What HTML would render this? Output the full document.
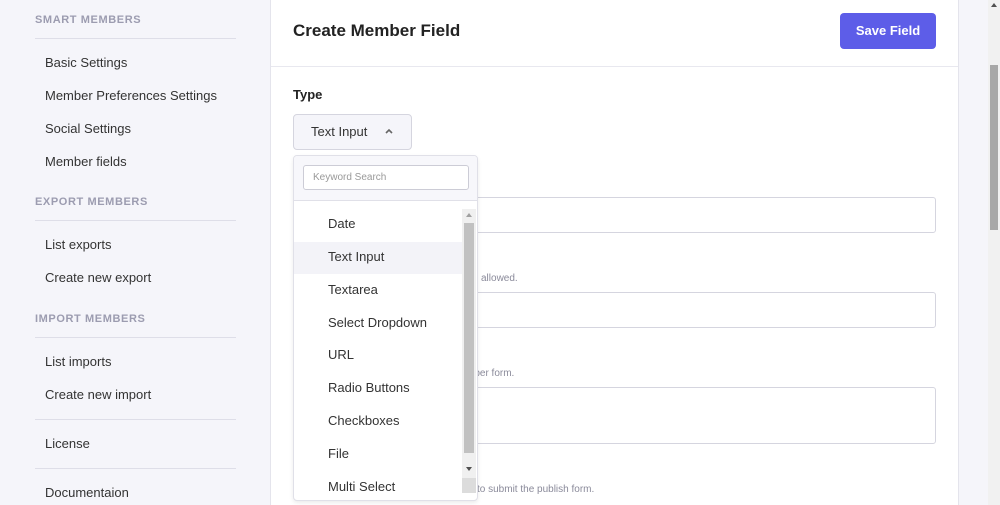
<!DOCTYPE html><html><head><style>
body{margin:0;width:1000px;height:505px;overflow:hidden;background:#f5f5fa;font-family:"Liberation Sans",sans-serif;position:relative;color:#222}
.a{position:absolute;white-space:nowrap}
.h{font-size:11px;font-weight:bold;color:#9c9cb0;letter-spacing:.6px;left:35px}
.l{font-size:13px;color:#333;left:45px}
.sep{position:absolute;left:35px;width:201px;height:1px;background:#dedee8}
.inp{position:absolute;left:293px;width:641px;border:1px solid #d5d5df;border-radius:3px;background:#fff}
.hint{font-size:10px;color:#8a8a9a}
.it{position:absolute;left:328px;font-size:13px;color:#333}
</style></head><body>
<div class="a h" style="top:14px">SMART MEMBERS</div>
<div class="sep" style="top:38px"></div>
<div class="a l" style="top:55px">Basic Settings</div>
<div class="a l" style="top:88px">Member Preferences Settings</div>
<div class="a l" style="top:121px">Social Settings</div>
<div class="a l" style="top:154px">Member fields</div>
<div class="a h" style="top:196px">EXPORT MEMBERS</div>
<div class="sep" style="top:220px"></div>
<div class="a l" style="top:237px">List exports</div>
<div class="a l" style="top:270px">Create new export</div>
<div class="a h" style="top:313px">IMPORT MEMBERS</div>
<div class="sep" style="top:337px"></div>
<div class="a l" style="top:354px">List imports</div>
<div class="a l" style="top:387px">Create new import</div>
<div class="sep" style="top:419px"></div>
<div class="a l" style="top:436px">License</div>
<div class="sep" style="top:468px"></div>
<div class="a l" style="top:485px">Documentaion</div>

<div class="a" style="left:270px;top:0;width:687px;height:505px;background:#fff;border-left:1px solid #e4e4ec;border-right:1px solid #e4e4ec"></div>
<div class="a" style="left:271px;top:66px;width:687px;height:1px;background:#e8e8ef"></div>
<div class="a" style="left:293px;top:21px;font-size:17px;font-weight:bold;color:#222">Create Member Field</div>
<div class="a" style="left:840px;top:13px;width:96px;height:36px;background:#5d5de8;border-radius:4px;color:#fff;font-size:13px;font-weight:bold;text-align:center;line-height:36px">Save Field</div>
<div class="a" style="left:293px;top:87px;font-size:13px;font-weight:bold">Type</div>
<div class="a" style="left:293px;top:114px;width:117px;height:34px;border:1px solid #d5d5df;border-radius:4px;background:#f5f5fa"></div>
<div class="a" style="left:311px;top:124px;font-size:13px;color:#333">Text Input</div>
<svg class="a" style="left:384px;top:127px" width="10" height="8"><path d="M2 6L5 3L8 6" stroke="#666" stroke-width="1.6" fill="none"/></svg>

<div class="inp" style="top:197px;height:34px"></div>
<div class="a hint" style="left:481px;top:273px">allowed.</div>
<div class="inp" style="top:292px;height:34px"></div>
<div class="a hint" style="left:466px;top:368px">mber form.</div>
<div class="inp" style="top:387px;height:55px"></div>
<div class="a hint" style="left:477px;top:484px">to submit the publish form.</div>

<div class="a" style="left:293px;top:155px;width:183px;height:344px;background:#fff;border:1px solid #e0e0e8;border-radius:4px;box-shadow:0 2px 4px rgba(0,0,0,.08);overflow:hidden">
<div style="position:absolute;left:0;top:0;width:183px;height:44px;background:#f7f7fb;border-bottom:1px solid #e0e0e8"></div>
<div style="position:absolute;left:9px;top:9px;width:164px;height:23px;border:1px solid #ccccd6;border-radius:3px;background:#fff;font-size:10px;color:#999;line-height:23px;padding-left:9px;box-sizing:border-box;width:166px;height:25px">Keyword Search</div>
<div style="position:absolute;left:0;top:86px;width:168px;height:32px;background:#f3f3f8"></div>
<div style="position:absolute;left:168px;top:53px;width:14px;height:284px;background:#f0f0f0"></div>
<div style="position:absolute;left:170px;top:67px;width:10px;height:230px;background:#c1c1c1"></div>
<div style="position:absolute;left:168px;top:322px;width:14px;height:15px;background:#dcdcdc"></div>
<svg style="position:absolute;left:170px;top:55px" width="10" height="8"><path d="M2 6L5 2L8 6Z" fill="#a0a0a0"/></svg>
<svg style="position:absolute;left:170px;top:309px" width="10" height="8"><path d="M2 2L5 6L8 2Z" fill="#505050"/></svg>
</div>
<div class="it" style="top:216px">Date</div>
<div class="it" style="top:249px">Text Input</div>
<div class="it" style="top:282px">Textarea</div>
<div class="it" style="top:315px">Select Dropdown</div>
<div class="it" style="top:347px">URL</div>
<div class="it" style="top:380px">Radio Buttons</div>
<div class="it" style="top:413px">Checkboxes</div>
<div class="it" style="top:446px">File</div>
<div class="it" style="top:479px">Multi Select</div>

<div class="a" style="left:988px;top:0;width:12px;height:505px;background:#f1f1f1"></div>
<div class="a" style="left:990px;top:65px;width:8px;height:165px;background:#a8a8a8"></div>
<svg class="a" style="left:989px;top:2px" width="10" height="6"><path d="M2 5L5 1L8 5Z" fill="#505050"/></svg>
</body></html>
